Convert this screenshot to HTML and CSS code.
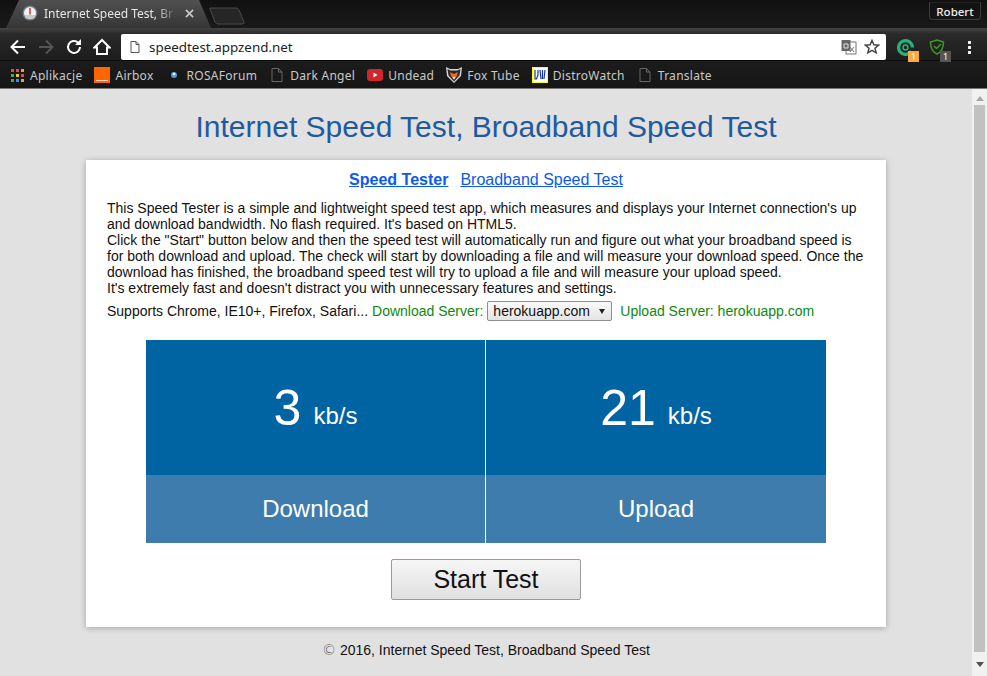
FILE: index.html
```html
<!DOCTYPE html>
<html lang="en">
<head>
<meta charset="utf-8">
<title>Internet Speed Test, Broadband Speed Test</title>
<link rel="stylesheet" href="styles.css">
</head>
<body>
<div class="browser">
  <header class="tabstrip">
    <div class="tab">
      <svg class="favicon" viewBox="0 0 16 16" width="16" height="16"><circle cx="8" cy="8" r="7.5" fill="#6f7f8c"/><circle cx="8" cy="8" r="6" fill="#f2f2f2"/><path d="M2.500 10h11l-1.500 3.500H4z" fill="#c9c9c9"/><rect x="7.200" y="3" width="1.600" height="6.500" fill="#d8412f"/></svg>
      <span class="tab-title">Internet Speed Test, Br</span>
      <svg class="tab-close" viewBox="0 0 10 10" width="9" height="9"><path d="M1 1l8 8M9 1l-8 8" stroke="#c4c4c4" stroke-width="2"/></svg>
    </div>
    <svg class="newtab" viewBox="0 0 36 18" width="36" height="18"><path d="M1 1h26q2 0 3 2l5 12q.5 2-2 2H9q-2 0-3-2L1 2z" fill="#262626" stroke="#4a4a4a"/></svg>
    <div class="profile">Robert</div>
  </header>
  <div class="toolbar">
    <svg class="nav" viewBox="0 0 18 18" width="18" height="18"><path d="M16 9H3M9 2.500L2.500 9 9 15.500" fill="none" stroke="#fff" stroke-width="2"/></svg>
    <svg class="nav nav-fwd" viewBox="0 0 18 18" width="18" height="18"><path d="M2 9h13M9 2.500L15.500 9 9 15.500" fill="none" stroke="#555" stroke-width="2"/></svg>
    <svg class="nav" viewBox="0 0 18 18" width="18" height="18"><path d="M15 9a6 6 0 1 1-2-4.500" fill="none" stroke="#fff" stroke-width="2"/><path d="M10 7h6V1z" fill="#fff"/></svg>
    <svg class="nav" viewBox="0 0 18 18" width="18" height="18"><path d="M9 2L1.500 9.500H4V16h10V9.500h2.500z" fill="none" stroke="#fff" stroke-width="2"/></svg>
    <div class="omnibox">
      <svg class="page-ic" viewBox="0 0 10 12" width="10" height="12"><path d="M1 .5h5l3 3v8H1zM6 .5v3h3" fill="none" stroke="#555"/></svg>
      <span class="url">speedtest.appzend.net</span>
      <svg class="translate" viewBox="0 0 16 16" width="16" height="16"><rect x="5" y="3" width="10" height="12" fill="#fff" stroke="#777"/><rect x="0.500" y="1" width="9" height="11" fill="#666"/><path d="M3 5h4v4H3z" fill="none" stroke="#ddd"/><path d="M9 8l4 5M13 8l-4 5" stroke="#777"/></svg>
      <svg class="star" viewBox="0 0 16 16" width="16" height="16"><path d="M8 1.500l1.900 4.300 4.600.4-3.500 3 1.100 4.600L8 11.400l-4.100 2.400L5 9.200l-3.500-3 4.600-.4z" fill="none" stroke="#444" stroke-width="1.500"/></svg>
    </div>
    <div class="ext ext-first">
      <svg viewBox="0 0 16 16" width="17" height="17"><path d="M13.500 11.500A6.500 6.500 0 1 1 14.500 8" fill="none" stroke="#25b37a" stroke-width="3"/><circle cx="8" cy="8" r="2.300" fill="none" stroke="#25b37a" stroke-width="1.400"/></svg>
      <span class="badge badge-orange">1</span>
    </div>
    <div class="ext ext-second">
      <svg viewBox="0 0 16 16" width="16" height="16"><path d="M8 1l6.500 2c0 6-2 10-6.500 12C3.500 13 1.500 9 1.500 3z" fill="none" stroke="#3f9b1f" stroke-width="1.500"/><path d="M5 7l2.500 2.500L12 5" fill="none" stroke="#3f9b1f" stroke-width="1.500"/></svg>
      <span class="badge badge-gray">1</span>
    </div>
    <div class="menu-dots"><i></i><i></i><i></i></div>
  </div>
  <nav class="bookmarks">
    <a class="bm bm-apps"><span class="apps"><i class="c1"></i><i class="c2"></i><i class="c3"></i><i class="c4"></i><i class="c5"></i><i class="c6"></i><i class="c7"></i><i class="c8"></i><i class="c9"></i></span>Aplikacje</a>
    <a class="bm"><svg viewBox="0 0 16 16" width="16" height="16"><rect width="16" height="16" fill="#f60"/><rect x="2" y="13" width="12" height="1" fill="#ffd9bf"/></svg>Airbox</a>
    <a class="bm"><svg viewBox="0 0 16 16" width="16" height="16"><circle cx="8" cy="8" r="3" fill="#4d9be8"/><circle cx="8" cy="7" r="1.300" fill="#fff"/></svg>ROSAForum</a>
    <a class="bm"><svg viewBox="0 0 16 16" width="16" height="16"><path d="M3 1.500h6.500l3.500 3.500v9.500H3zM9.500 1.500V5H13" fill="none" stroke="#666"/></svg>Dark Angel</a>
    <a class="bm"><svg viewBox="0 0 16 16" width="16" height="16"><rect y="2" width="16" height="12" rx="3" fill="#d3262a"/><path d="M6.500 5.500l4 2.500-4 2.500z" fill="#fff"/></svg>Undead</a>
    <a class="bm"><svg viewBox="0 0 16 16" width="16" height="16"><path d="M0 0l4 2h8l4-2-1 9-7 7-7-7z" fill="#d8d8d8"/><path d="M1.500 2l3 1.500h7l3-1.500-1 6.500L8 14.500 2.500 8.500z" fill="#2a2a2a"/><path d="M4 5l4 2 4-2-1 4-3 3.500L5 9z" fill="#ee6a1f"/><path d="M6.500 10.500L8 12.500l1.500-2L8 9.500z" fill="#f4efe8"/></svg>Fox Tube</a>
    <a class="bm"><svg viewBox="0 0 16 16" width="16" height="16"><rect x="0.500" y="0.500" width="15" height="15" fill="#fff" stroke="#ff0"/><path d="M3 3v9h1.500L6 8V3M8 3l1 9M10.500 3v9M13 3l-1 9" fill="none" stroke="#1537a5" stroke-width="1.200"/></svg>DistroWatch</a>
    <a class="bm"><svg viewBox="0 0 16 16" width="16" height="16"><path d="M3 1.500h6.500l3.500 3.500v9.500H3zM9.500 1.500V5H13" fill="none" stroke="#666"/></svg>Translate</a>
  </nav>
  <div class="viewport">
    <main class="page">
      <h1 class="title">Internet Speed Test, Broadband Speed Test</h1>
      <section class="card">
        <div class="tabs-links">
          <a class="link link-active" href="#">Speed Tester</a>
          <a class="link" href="#">Broadband Speed Test</a>
        </div>
        <p class="intro">This Speed Tester is a simple and lightweight speed test app, which measures and displays your Internet connection's up and download bandwidth. No flash required. It's based on HTML5.<br>
        Click the "Start" button below and then the speed test will automatically run and figure out what your broadband speed is for both download and upload. The check will start by downloading a file and will measure your download speed. Once the download has finished, the broadband speed test will try to upload a file and will measure your upload speed.<br>
        It's extremely fast and doesn't distract you with unnecessary features and settings.</p>
        <div class="servers">
          <span>Supports Chrome, IE10+, Firefox, Safari...</span>
          <span class="green">Download Server:</span>
          <span class="select">herokuapp.com<svg viewBox="0 0 6 5" width="6" height="5"><path d="M0 0h6L3 5z" fill="#222"/></svg></span>
          <span class="green upload-server">Upload Server: herokuapp.com</span>
        </div>
        <div class="meters">
          <div class="meter">
            <div class="reading"><span class="value">3</span><span class="unit">kb/s</span></div>
            <div class="label">Download</div>
          </div>
          <div class="meter">
            <div class="reading"><span class="value">21</span><span class="unit">kb/s</span></div>
            <div class="label">Upload</div>
          </div>
        </div>
        <div class="actions"><button class="start" type="button">Start Test</button></div>
      </section>
      <footer class="foot"><span class="copy">©</span> 2016, Internet Speed Test, Broadband Speed Test</footer>
    </main>
    <div class="scrollbar">
      <svg viewBox="0 0 8 5" width="8" height="5"><path d="M4 0l4 5H0z" fill="#a8a8a8"/></svg>
      <div class="thumb"></div>
      <svg viewBox="0 0 8 5" width="8" height="5"><path d="M0 0h8L4 5z" fill="#505050"/></svg>
    </div>
  </div>
</div>
</body>
</html>
```
FILE: styles.css
```css
* { box-sizing: border-box; }
html, body { margin: 0; height: 100%; overflow: hidden; }
body { font-family: "Liberation Sans", Arial, sans-serif; background: #e1e1e1; color: #111; }
.browser { display: flex; flex-direction: column; height: 676px; width: 987px; }

.tabstrip { height: 28px; flex: none; display: flex; align-items: flex-start; background: linear-gradient(#111, #191919); font-family: "Noto Sans", sans-serif; }
.tab { width: 205px; height: 28px; margin-left: 6px; padding: 0 0 0 16px; display: flex; align-items: center; background: linear-gradient(#505050, #363636); clip-path: polygon(0 100%, 13px 0, 193px 0, 205px 100%); }
.favicon { flex: none; margin-top: -2px; }
.tab-title { width: 130px; margin: -2px 0 0 6px; font-size: 12px; white-space: nowrap; color: #e6e6e6; -webkit-mask-image: linear-gradient(90deg, #000 85%, rgba(0,0,0,.2)); mask-image: linear-gradient(90deg, #000 85%, rgba(0,0,0,.2)); }
.tab-close { flex: none; margin: -2px 0 0 11px; }
.newtab { margin: 7px 0 0 -2px; }
.profile { margin-left: auto; margin-right: 6px; margin-top: 2px; width: 52px; height: 18px; text-align: center; font-size: 11.500px; line-height: 17px; font-weight: 500; color: #eee; border: 1px solid #3d3d3d; border-top-color: #222; border-radius: 0 0 4px 4px; }

.toolbar { height: 33px; flex: none; display: flex; align-items: center; padding: 6px 0 0 9px; background: linear-gradient(#444, #2a2a2a 6px, #1d1d1d); border-bottom: 1px solid #0a0a0a; }
.nav { flex: none; margin-right: 10px; }
.omnibox { width: 765px; height: 26px; padding: 0 6px 0 9px; display: flex; align-items: center; background: #fff; border-radius: 2px; }
.page-ic { flex: none; }
.url { margin-left: 9px; font: 13.400px "Noto Sans", sans-serif; color: #222; flex: 1; }
.translate { flex: none; margin-right: 7px; }
.star { flex: none; }
.ext { position: relative; width: 17px; height: 17px; flex: none; }
.ext-first { margin-left: 11px; }
.ext-second { margin-left: 15px; }
.badge { position: absolute; left: 11px; top: 12px; width: 11px; height: 11px; font: 9px/11px "Noto Sans", sans-serif; color: #fff; text-align: center; }
.badge-orange { background: #f9a843; }
.badge-gray { background: #555; }
.menu-dots { margin-left: 22px; display: flex; flex-direction: column; gap: 2px; }
.menu-dots i { width: 3px; height: 3px; background: #eee; }

.bookmarks { height: 28px; flex: none; display: flex; align-items: center; padding: 1px 0 0 11px; gap: 12px; background: linear-gradient(#1c1c1c, #161616); border-bottom: 1px solid #777; font: 12px "Noto Sans", sans-serif; letter-spacing: .27px; color: #c9c9c9; }
.bm { display: flex; align-items: center; gap: 5px; white-space: nowrap; }
.bm-apps { gap: 6px; }
.apps { display: grid; grid-template-columns: repeat(3, 3px); gap: 2px; }
.apps i { width: 3px; height: 3px; }
.c1 { background: #e04a3f; } .c2 { background: #e04a3f; } .c3 { background: #e9a13b; }
.c4 { background: #3cab5a; } .c5 { background: #e7c33a; } .c6 { background: #e04a3f; }
.c7 { background: #3cab5a; } .c8 { background: #4285f4; } .c9 { background: #e7a33a; }

.viewport { flex: 1; min-height: 0; display: flex; }
.page { width: 972px; flex: none; display: flex; flex-direction: column; align-items: center; background: #e1e1e1; }
.title { margin: 21px 0 0; font-size: 30px; line-height: 34px; font-weight: 400; color: #1f5a9e; }
.card { width: 800px; height: 467px; margin-top: 16px; padding: 11px 21px 0; display: flex; flex-direction: column; background: #fff; box-shadow: 0 1px 6px rgba(0,0,0,.28); }
.tabs-links { display: flex; justify-content: center; gap: 12px; font-size: 16px; line-height: 18px; }
.link { color: #0a5af0; }
.link-active { font-weight: 700; }
.intro { margin: 11px 0 0; font-size: 14px; line-height: 16px; }
.servers { margin-top: 5px; display: flex; align-items: center; font-size: 14px; line-height: 20px; }
.green { color: #0c8a0c; margin-left: 4px; }
.select { margin-left: 4px; width: 125px; height: 20px; padding: 0 6px 0 5px; display: flex; align-items: center; justify-content: space-between; border: 1px solid #8e8e8e; border-radius: 2px; background: linear-gradient(#fafafa, #e4e4e4); }
.upload-server { margin-left: 8px; }
.meters { width: 680px; margin: 19px 0 0 39px; display: flex; color: #fff; }
.meter { width: 340px; }
.meter:first-child { border-right: 1px solid #fff; }
.reading { height: 135px; padding-top: 2px; display: flex; align-items: center; justify-content: center; background: #0064a3; }
.value { font-size: 50px; line-height: 57px; }
.unit { margin: 14px 0 0 12px; font-size: 24px; line-height: 28px; }
.label { height: 68px; display: flex; align-items: center; justify-content: center; background: #3d7cac; font-size: 24px; }
.actions { margin-top: 16px; display: flex; justify-content: center; }
.start { width: 190px; height: 41px; padding: 0; font: 25px "Liberation Sans", sans-serif; color: #111; background: linear-gradient(#f6f6f6, #e0e0e0); border: 1px solid #9a9a9a; border-radius: 2px; }
.foot { margin-top: 14px; font-size: 14px; line-height: 18px; }
.copy { font-family: "DejaVu Sans", sans-serif; font-weight: 200; color: #333; }

.scrollbar { width: 15px; flex: none; display: flex; flex-direction: column; align-items: center; background: #f1f1f1; padding-top: 7px; }
.thumb { width: 11px; height: 547px; margin: 4px 0 10px; background: #c1c1c1; }
```
